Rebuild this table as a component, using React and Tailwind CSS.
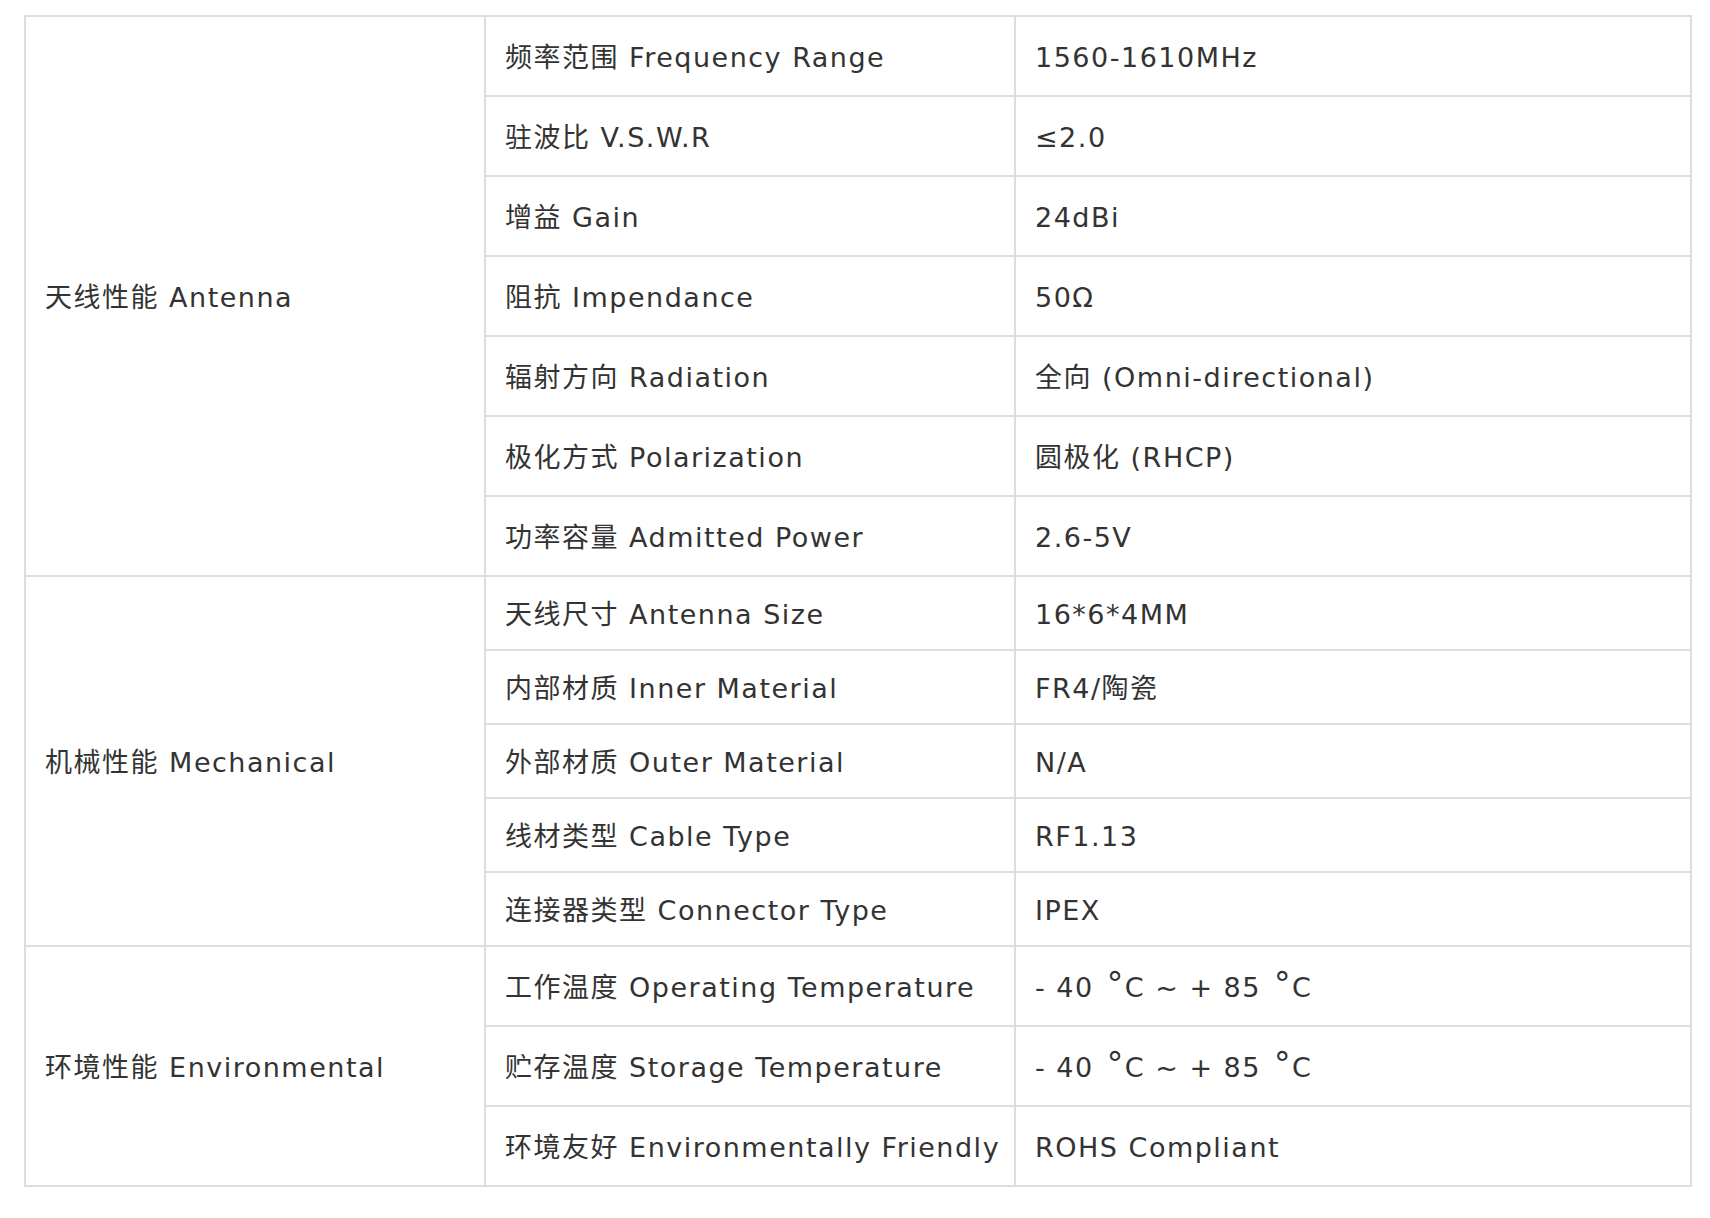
const SECTIONS = [
  {
    title: '天线性能 Antenna',
    tall: true,
    rows: [
      ['频率范围 Frequency Range', '1560-1610MHz'],
      ['驻波比 V.S.W.R', '≤2.0'],
      ['增益 Gain', '24dBi'],
      ['阻抗 Impendance', '50Ω'],
      ['辐射方向 Radiation', '全向 (Omni-directional)'],
      ['极化方式 Polarization', '圆极化 (RHCP)'],
      ['功率容量 Admitted Power', '2.6-5V'],
    ],
  },
  {
    title: '机械性能 Mechanical',
    tall: false,
    rows: [
      ['天线尺寸 Antenna Size', '16*6*4MM'],
      ['内部材质 Inner Material', 'FR4/陶瓷'],
      ['外部材质 Outer Material', 'N/A'],
      ['线材类型 Cable Type', 'RF1.13'],
      ['连接器类型 Connector Type', 'IPEX'],
    ],
  },
  {
    title: '环境性能 Environmental',
    tall: true,
    rows: [
      ['工作温度 Operating Temperature', 'temp'],
      ['贮存温度 Storage Temperature', 'temp'],
      ['环境友好 Environmentally Friendly', 'ROHS Compliant'],
    ],
  },
];

const cell = 'border-2 border-[#dddddd] px-[19px] pt-[4px] pb-0 align-middle text-left font-normal';

function Deg() {
  return <span className="ml-[3px] inline-block -translate-y-[1px] text-[33px] leading-none">°</span>;
}

function Temp() {
  return (
    <>
      - 40 <Deg />C ~ + 85 <Deg />C
    </>
  );
}

export default function App() {
  return (
    <div
      className="min-h-screen bg-white pt-[15px] pl-[24px] text-[27px] tracking-[1.5px] text-[#333333]"
      style={{ fontFamily: '"DejaVu Sans", "Noto Sans CJK SC", sans-serif' }}
    >
      <table className="w-[1668px] table-fixed border-collapse">
        <colgroup>
          <col className="w-[460px]" />
          <col className="w-[530px]" />
          <col />
        </colgroup>
        <tbody>
          {SECTIONS.map((section) =>
            section.rows.map(([label, value], i) => (
              <tr key={label} className={section.tall ? 'h-[80px]' : 'h-[74px]'}>
                {i === 0 && (
                  <td rowSpan={section.rows.length} className={cell}>
                    {section.title}
                  </td>
                )}
                <td className={`${cell} whitespace-nowrap`}>{label}</td>
                <td className={cell}>{value === 'temp' ? <Temp /> : value}</td>
              </tr>
            ))
          )}
        </tbody>
      </table>
    </div>
  );
}
